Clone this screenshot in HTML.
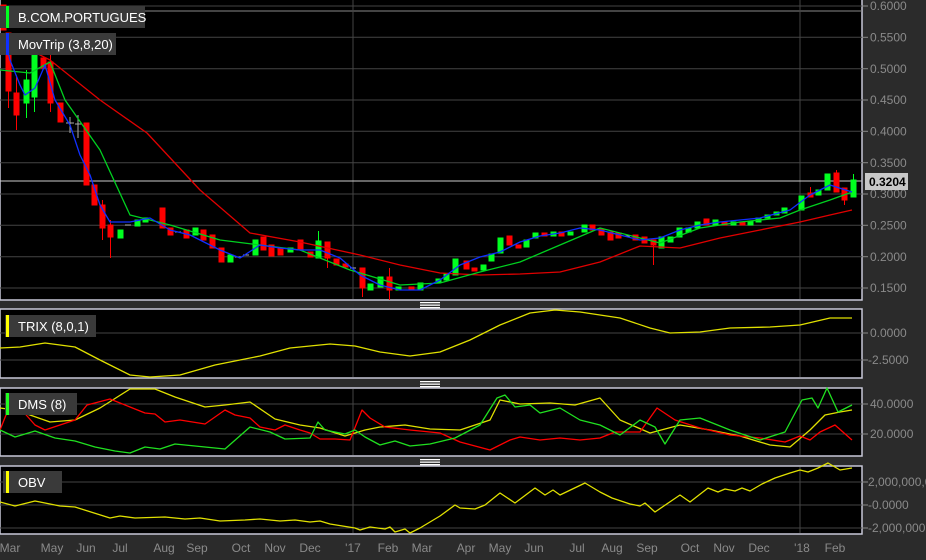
<!DOCTYPE html>
<html><head><meta charset="utf-8"><style>
html,body{margin:0;padding:0;background:#2b2b2b;width:926px;height:560px;overflow:hidden}
svg{display:block}
text{font-family:"Liberation Sans",sans-serif}
</style></head><body>
<svg width="926" height="560" viewBox="0 0 926 560" xmlns="http://www.w3.org/2000/svg">
<rect width="926" height="560" fill="#2b2b2b"/>
<!-- panels -->
<rect x="0" y="-2" width="862" height="302" fill="#000" stroke="#c8c8d8" stroke-width="1.5"/>
<rect x="0" y="309" width="862" height="69" fill="#000" stroke="#c8c8d8" stroke-width="1.5"/>
<rect x="0" y="388" width="862" height="68" fill="#000" stroke="#c8c8d8" stroke-width="1.5"/>
<rect x="0" y="466" width="862" height="68" fill="#000" stroke="#c8c8d8" stroke-width="1.5"/>
<!-- handles -->
<g fill="#fff">
<rect x="420" y="302" width="20" height="1.3"/><rect x="420" y="304.5" width="20" height="1.3"/><rect x="420" y="307" width="20" height="1.3"/>
<rect x="420" y="381" width="20" height="1.3"/><rect x="420" y="383.5" width="20" height="1.3"/><rect x="420" y="386" width="20" height="1.3"/>
<rect x="420" y="459" width="20" height="1.3"/><rect x="420" y="461.5" width="20" height="1.3"/><rect x="420" y="464" width="20" height="1.3"/>
</g>
<!-- grid -->
<g stroke="#444" stroke-width="1">
<line x1="0" y1="6" x2="862" y2="6"/><line x1="0" y1="11" x2="862" y2="11" stroke="#888"/>
<line x1="0" y1="37.3" x2="862" y2="37.3"/><line x1="0" y1="68.7" x2="862" y2="68.7"/>
<line x1="0" y1="100" x2="862" y2="100"/><line x1="0" y1="131.3" x2="862" y2="131.3"/>
<line x1="0" y1="162.7" x2="862" y2="162.7"/><line x1="0" y1="194" x2="862" y2="194"/>
<line x1="0" y1="225.3" x2="862" y2="225.3"/><line x1="0" y1="256.7" x2="862" y2="256.7"/>
<line x1="0" y1="288" x2="862" y2="288"/>
<line x1="0" y1="333" x2="862" y2="333"/><line x1="0" y1="360" x2="862" y2="360"/>
<line x1="0" y1="404" x2="862" y2="404"/><line x1="0" y1="434" x2="862" y2="434"/>
<line x1="0" y1="482" x2="862" y2="482"/><line x1="0" y1="505" x2="862" y2="505"/><line x1="0" y1="528" x2="862" y2="528"/>
<line x1="353" y1="0" x2="353" y2="299"/><line x1="800" y1="0" x2="800" y2="299"/>
<line x1="353" y1="310" x2="353" y2="377"/><line x1="800" y1="310" x2="800" y2="377"/>
<line x1="353" y1="389" x2="353" y2="455"/><line x1="800" y1="389" x2="800" y2="455"/>
<line x1="353" y1="467" x2="353" y2="533"/><line x1="800" y1="467" x2="800" y2="533"/>
</g>
<line x1="0" y1="181" x2="862" y2="181" stroke="#ccc" stroke-width="1"/>
<!-- candles -->
<g stroke-width="1">
<g fill="#ff0000" stroke="#ff0000">
<rect x="1" y="5" width="5" height="25"/><rect x="6" y="33" width="5" height="58"/><line x1="8.5" y1="91" x2="8.5" y2="108"/>
<rect x="14" y="93" width="5" height="22"/><line x1="16.5" y1="75" x2="16.5" y2="130"/>
<rect x="41" y="58" width="5" height="10"/><rect x="48" y="62" width="5" height="41"/><line x1="50.5" y1="50" x2="50.5" y2="112"/>
<rect x="58" y="103" width="5" height="19"/><rect x="84" y="123" width="5" height="62"/>
<rect x="92" y="185" width="5" height="20"/><rect x="100" y="205" width="5" height="23"/><line x1="102.5" y1="200" x2="102.5" y2="240"/>
<rect x="108" y="225" width="5" height="12"/><line x1="110.5" y1="220" x2="110.5" y2="258"/>
<rect x="160" y="208" width="5" height="20"/><rect x="168" y="228" width="5" height="7"/>
<rect x="184" y="230" width="5" height="8"/><rect x="201" y="230" width="5" height="10"/>
<rect x="210" y="235" width="5" height="13"/><rect x="219" y="248" width="5" height="14"/>
<rect x="261" y="237" width="5" height="13"/><rect x="269" y="245" width="5" height="11"/>
<rect x="278" y="248" width="5" height="7"/><rect x="298" y="240" width="5" height="10"/>
<rect x="308" y="252" width="5" height="5"/><rect x="325" y="242" width="5" height="16"/><line x1="327.5" y1="258" x2="327.5" y2="268"/>
<rect x="334" y="259" width="5" height="6"/><rect x="343" y="264" width="5" height="3"/>
<rect x="360" y="268" width="5" height="20"/><line x1="362.5" y1="288" x2="362.5" y2="297"/>
<rect x="387" y="277" width="5" height="13"/><line x1="389.5" y1="268" x2="389.5" y2="300"/>
<rect x="409" y="287" width="5" height="3"/><rect x="464" y="261" width="5" height="8"/>
<rect x="472" y="268" width="5" height="3"/><rect x="507" y="236" width="5" height="9"/>
<rect x="516" y="245" width="5" height="3"/><rect x="542" y="233" width="5" height="3"/>
<rect x="559" y="232" width="5" height="4"/><rect x="590" y="225" width="5" height="5"/>
<rect x="599" y="229" width="5" height="6"/><rect x="608" y="232" width="5" height="8"/>
<rect x="616" y="233" width="5" height="5"/><rect x="633" y="235" width="5" height="5"/>
<rect x="642" y="237" width="5" height="6"/><rect x="651" y="240" width="5" height="5"/><line x1="653.5" y1="245" x2="653.5" y2="265"/>
<rect x="704" y="219" width="5" height="6"/><rect x="722" y="222" width="5" height="3"/>
<rect x="740" y="222" width="5" height="3"/><rect x="808" y="193" width="5" height="4"/><line x1="810.5" y1="187" x2="810.5" y2="197"/>
<rect x="834" y="173" width="5" height="19"/><line x1="836.5" y1="170" x2="836.5" y2="192"/>
<rect x="842" y="188" width="5" height="12"/><line x1="844.5" y1="200" x2="844.5" y2="205"/>
</g>
<g fill="#00ff20" stroke="#00ff20">
<rect x="24" y="80" width="5" height="23"/><line x1="26.5" y1="70" x2="26.5" y2="118"/>
<rect x="32" y="55" width="5" height="42"/><line x1="34.5" y1="40" x2="34.5" y2="112"/>
<rect x="118" y="230" width="5" height="8"/><rect x="135" y="220" width="5" height="6"/>
<rect x="143" y="218" width="5" height="4"/><rect x="193" y="228" width="5" height="7"/>
<rect x="228" y="255" width="5" height="7"/><rect x="253" y="240" width="5" height="15"/>
<rect x="288" y="248" width="5" height="4"/><rect x="316" y="241" width="5" height="17"/><line x1="318.5" y1="231" x2="318.5" y2="241"/>
<rect x="368" y="284" width="5" height="6"/><rect x="378" y="277" width="5" height="10"/>
<rect x="396" y="287" width="5" height="3"/><rect x="418" y="283" width="5" height="7"/>
<rect x="436" y="279" width="5" height="3"/><rect x="444" y="274" width="5" height="6"/>
<rect x="453" y="259" width="5" height="16"/><rect x="481" y="265" width="5" height="5"/>
<rect x="489" y="254" width="5" height="7"/><rect x="498" y="238" width="5" height="15"/>
<rect x="524" y="240" width="5" height="7"/><rect x="533" y="233" width="5" height="5"/>
<rect x="551" y="232" width="5" height="4"/><rect x="568" y="232" width="5" height="3"/>
<rect x="582" y="225" width="5" height="7"/><rect x="659" y="237" width="5" height="11"/>
<rect x="668" y="237" width="5" height="5"/><rect x="677" y="228" width="5" height="9"/>
<rect x="686" y="228" width="5" height="4"/><rect x="695" y="222" width="5" height="6"/>
<rect x="713" y="220" width="5" height="5"/><rect x="731" y="222" width="5" height="3"/>
<rect x="748" y="221" width="5" height="4"/><rect x="756" y="218" width="5" height="4"/>
<rect x="765" y="215" width="5" height="3"/><rect x="774" y="212" width="5" height="3"/>
<rect x="782" y="208" width="5" height="5"/><rect x="799" y="196" width="5" height="14"/>
<rect x="816" y="190" width="5" height="5"/><rect x="825" y="174" width="5" height="16"/>
<rect x="851" y="180" width="5" height="17"/><line x1="853.5" y1="174" x2="853.5" y2="180"/>
</g>
<g stroke="#aaa"><line x1="66" y1="123" x2="74" y2="123"/><line x1="70" y1="117" x2="70" y2="133"/>
<line x1="75" y1="124" x2="82" y2="124"/><line x1="78" y1="115" x2="78" y2="138"/>
<line x1="125" y1="225" x2="131" y2="225"/><line x1="175" y1="232" x2="181" y2="232"/>
<line x1="235" y1="257" x2="241" y2="257"/><line x1="243" y1="255" x2="249" y2="255"/>
<line x1="350" y1="268" x2="356" y2="268"/><line x1="624" y1="236" x2="630" y2="236"/></g>
</g>
<!-- MAs -->
<g fill="none" stroke-width="1.3" stroke-linejoin="round">
<polyline stroke="#e00000" points="0,35 50,60 100,100 147,133 200,190 250,233 300,242 360,255 400,265 440,273 480,275 520,274 560,272 600,262 640,246 680,248 720,238 760,230 800,222 830,215 852,210"/>
<polyline stroke="#00d020" points="0,70 30,73 50,62 65,100 100,150 130,215 170,225 220,240 300,250 350,270 400,285 440,283 480,272 520,262 560,245 600,228 640,238 660,243 700,228 740,222 780,218 800,210 830,200 852,192"/>
<polyline stroke="#1030ff" points="5,40 10,60 20,85 25,95 35,88 45,65 55,100 70,125 80,155 90,175 100,205 110,222 130,222 150,218 170,230 190,235 220,250 240,258 260,245 280,248 300,250 320,250 340,258 360,275 380,285 400,290 420,290 440,280 460,265 480,257 500,252 520,242 540,236 560,233 580,228 600,230 620,235 640,240 660,238 680,230 700,225 720,222 760,218 790,210 810,195 830,185 852,192"/>
<!-- TRIX -->
<polyline stroke="#e0e000" points="0,348 20,347 45,343 75,347 100,360 130,375 150,377 180,375 215,365 240,360 260,356 290,348 330,344 355,346 380,352 410,356 440,352 470,340 500,325 530,313 555,310 580,312 620,318 650,328 670,333 700,332 730,328 770,327 800,325 830,318 852,318"/>
<!-- DMS -->
<polyline stroke="#e0e000" points="0,408 15,410 30,415 50,422 75,420 100,408 130,389 155,389 175,397 205,407 225,405 250,402 275,419 300,425 320,428 345,436 365,430 380,427 405,425 430,429 460,430 490,420 500,400 520,404 550,403 575,405 600,398 620,420 650,433 680,425 710,430 740,436 770,445 790,447 810,430 825,415 840,412 852,410"/>
<polyline stroke="#ff0000" points="0,430 8,410 20,408 35,425 45,430 60,425 75,420 87,405 110,399 130,407 145,413 155,414 165,422 180,420 205,424 225,410 235,415 250,418 260,427 275,430 285,425 300,430 310,433 320,439 335,439 350,440 362,410 370,418 385,427 410,430 440,433 460,442 490,450 510,440 520,437 540,440 560,438 580,440 600,438 615,432 640,432 657,408 675,420 700,428 730,435 760,438 785,442 800,436 810,440 820,432 835,425 852,440"/>
<polyline stroke="#20e020" points="0,430 15,437 35,431 55,438 75,441 95,447 115,451 130,453 145,447 160,449 175,444 195,446 225,449 250,427 270,432 285,439 310,438 318,422 325,430 345,434 355,430 365,437 380,445 395,441 410,446 430,444 455,438 480,425 497,398 505,395 515,407 530,405 540,413 560,408 580,420 600,425 620,435 640,420 655,427 665,444 680,420 700,418 730,430 760,440 785,432 802,400 812,398 818,408 827,388 838,412 852,405"/>
<!-- OBV -->
<polyline stroke="#e0e000" points="0,502 15,506 35,501 60,506 75,507 110,518 120,516 135,518 165,517 185,519 200,518 220,521 245,520 260,519 280,521 295,520 310,522 320,521 330,524 355,528 360,530 370,527 385,529 390,527 395,532 405,529 410,533 420,528 440,516 455,505 460,508 475,509 485,505 500,493 515,503 535,488 545,495 553,490 560,495 585,483 600,492 612,498 630,504 640,506 645,503 655,512 680,495 690,502 708,488 718,492 725,489 735,491 742,488 750,491 762,484 775,478 790,473 800,470 808,472 818,468 828,463 840,470 852,468"/>
</g>
<!-- legend boxes -->
<rect x="0" y="6" width="145" height="22" fill="#3a3a3a"/><rect x="6" y="6" width="3" height="22" fill="#00ff20"/>
<text x="18" y="22" fill="#fff" font-size="13">B.COM.PORTUGUES</text>
<rect x="0" y="33" width="116" height="22" fill="#3a3a3a"/><rect x="6" y="33" width="3" height="22" fill="#1030ff"/>
<text x="18" y="49" fill="#fff" font-size="13">MovTrip (3,8,20)</text>
<rect x="5" y="315" width="91" height="22" fill="#3a3a3a"/><rect x="6" y="315" width="3" height="22" fill="#ffff00"/>
<text x="18" y="331" fill="#fff" font-size="13">TRIX (8,0,1)</text>
<rect x="5" y="393" width="72" height="22" fill="#3a3a3a"/><rect x="6" y="393" width="3" height="22" fill="#20ff20"/>
<text x="18" y="409" fill="#fff" font-size="13">DMS (8)</text>
<rect x="3" y="471" width="59" height="22" fill="#3a3a3a"/><rect x="6" y="471" width="3" height="22" fill="#ffff00"/>
<text x="18" y="487" fill="#fff" font-size="13">OBV</text>
<!-- y axis -->
<g stroke="#888"><line x1="862" y1="6" x2="868" y2="6"/><line x1="862" y1="37.3" x2="868" y2="37.3"/><line x1="862" y1="68.7" x2="868" y2="68.7"/><line x1="862" y1="100" x2="868" y2="100"/><line x1="862" y1="131.3" x2="868" y2="131.3"/><line x1="862" y1="162.7" x2="868" y2="162.7"/><line x1="862" y1="194" x2="868" y2="194"/><line x1="862" y1="225.3" x2="868" y2="225.3"/><line x1="862" y1="256.7" x2="868" y2="256.7"/><line x1="862" y1="288" x2="868" y2="288"/><line x1="862" y1="333" x2="868" y2="333"/><line x1="862" y1="360" x2="868" y2="360"/><line x1="862" y1="404" x2="868" y2="404"/><line x1="862" y1="434" x2="868" y2="434"/><line x1="862" y1="482" x2="868" y2="482"/><line x1="862" y1="505" x2="868" y2="505"/><line x1="862" y1="528" x2="868" y2="528"/></g>
<g fill="#8a8a8a" font-size="12">
<text x="870" y="10">0.6000</text><text x="870" y="41.5">0.5500</text><text x="870" y="73">0.5000</text><text x="870" y="104">0.4500</text><text x="870" y="135.5">0.4000</text><text x="870" y="167">0.3500</text><text x="870" y="198">0.3000</text><text x="870" y="229.5">0.2500</text><text x="870" y="261">0.2000</text><text x="870" y="292">0.1500</text>
<text x="870" y="337">0.0000</text><text x="868" y="364">-2.5000</text>
<text x="870" y="408">40.0000</text><text x="870" y="438">20.0000</text>
<text x="868" y="486">2,000,000,0</text><text x="868" y="509">-0.0000</text><text x="868" y="532">-2,000,000,0</text>
</g>
<rect x="865" y="173" width="43" height="17" fill="#c8c8c8"/>
<text x="869" y="186" fill="#000" font-size="12" font-weight="bold">0.3204</text>
<!-- x axis -->
<g fill="#8a8a8a" font-size="12" text-anchor="middle">
<text x="10" y="552">Mar</text><text x="52" y="552">May</text><text x="86" y="552">Jun</text><text x="120" y="552">Jul</text><text x="164" y="552">Aug</text><text x="197" y="552">Sep</text><text x="241" y="552">Oct</text><text x="275" y="552">Nov</text><text x="310" y="552">Dec</text><text x="353" y="552">'17</text><text x="388" y="552">Feb</text><text x="422" y="552">Mar</text><text x="466" y="552">Apr</text><text x="500" y="552">May</text><text x="534" y="552">Jun</text><text x="577" y="552">Jul</text><text x="612" y="552">Aug</text><text x="647" y="552">Sep</text><text x="690" y="552">Oct</text><text x="724" y="552">Nov</text><text x="759" y="552">Dec</text><text x="802" y="552">'18</text><text x="835" y="552">Feb</text>
</g>
</svg>
</body></html>
